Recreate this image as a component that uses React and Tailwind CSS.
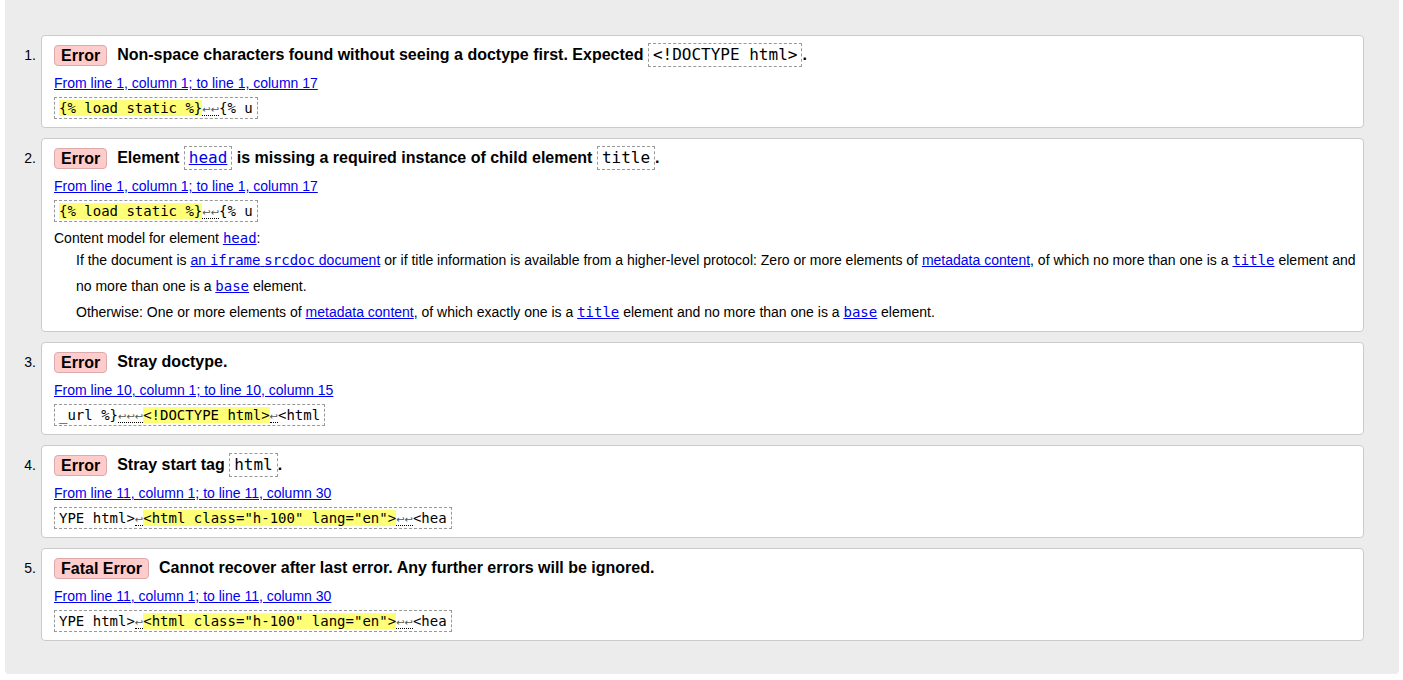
import React from 'react';

const sans = "font-['Liberation_Sans',Arial,sans-serif]";
const mono = "font-['DejaVu_Sans_Mono',monospace]";

function Badge({ children }) {
  return (
    <span className="inline-block shrink-0 rounded-[4px] border border-[#dcaaaa] bg-[#fcc] px-[6px] text-[16px] font-bold leading-[19px] text-black">
      {children}
    </span>
  );
}

function TitleCode({ children }) {
  return (
    <span className={`inline-block border border-dashed border-[#999] px-[4px] text-[16px] font-normal leading-[22px] ${mono}`}>
      {children}
    </span>
  );
}

function Ret({ n = 1 }) {
  return (
    <span className="border-b border-dotted border-black font-['DejaVu_Sans',sans-serif] text-[10px] text-[#555]">
      {'↩'.repeat(n)}
    </span>
  );
}

function Mark({ children }) {
  return <span className="bg-[#ffff77]">{children}</span>;
}

function CodeBox({ children }) {
  return (
    <div className="mt-[4px] flex">
      <span className={`block h-[22px] whitespace-pre border border-dashed border-[#999] px-[4px] text-[14px] leading-[20px] text-black ${mono}`}>
        {children}
      </span>
    </div>
  );
}

function Loc({ children }) {
  return (
    <div className="mt-[6px] h-[20px] text-[14px] leading-[20px]">
      <a href="#" className="text-[#0000ee] underline">
        {children}
      </a>
    </div>
  );
}

function Item({ n, badge, title, loc, code, children, pb = 'pb-[8px]' }) {
  return (
    <li className="flex">
      <span className="w-[36px] shrink-0 pr-[5px] pt-[8px] text-right text-[14px] leading-[24px] text-black">
        {n}.
      </span>
      <div className={`min-w-0 flex-1 rounded-[4px] border border-[#cbcbcb] bg-white px-[12px] pt-[7px] ${pb}`}>
        <div className="flex h-[24px] items-center">
          <Badge>{badge}</Badge>
          <span className="ml-[10px] flex items-center whitespace-pre text-[16px] font-bold leading-[24px] text-black">{title}</span>
        </div>
        <Loc>{loc}</Loc>
        <CodeBox>{code}</CodeBox>
        {children}
      </div>
    </li>
  );
}

const A = ({ children, m }) => (
  <a href="#" className={`text-[#0000ee] underline ${m ? mono : ''}`}>
    {children}
  </a>
);

export default function App() {
  return (
    <div className={`min-h-[680px] bg-white ${sans}`}>
      <div className="ml-[5px] mr-[4px] rounded-b-[4px] bg-[#ececec] pb-[33px] pr-[35px] pt-[35px]">
        <ol className="flex flex-col gap-[10px]">
          <Item
            n={1}
            badge="Error"
            title={
              <>
                {'Non-space characters found without seeing a doctype first. Expected '}
                <TitleCode>&lt;!DOCTYPE html&gt;</TitleCode>.
              </>
            }
            loc="From line 1, column 1; to line 1, column 17"
            code={
              <>
                <Mark>{'{% load static %}'}</Mark>
                <Ret n={2} />
                {'{% u'}
              </>
            }
          />
          <Item
            n={2}
            badge="Error"
            pb="pb-[6px]"
            title={
              <>
                {'Element '}
                <TitleCode>
                  <a href="#" className="text-[#0000ee] underline">head</a>
                </TitleCode>
                {' is missing a required instance of child element '}
                <TitleCode>title</TitleCode>.
              </>
            }
            loc="From line 1, column 1; to line 1, column 17"
            code={
              <>
                <Mark>{'{% load static %}'}</Mark>
                <Ret n={2} />
                {'{% u'}
              </>
            }
          >
            <div className="mt-[6px] text-[14px] leading-[20px] text-black">
              Content model for element <A m>head</A>:
            </div>
            <div className="-mt-[1px] pl-[22px] text-[14px] leading-[26px] text-black">
              <p className="whitespace-nowrap">
                If the document is{' '}
                <A>
                  an <span className={mono}>iframe</span> <span className={mono}>srcdoc</span> document
                </A>{' '}
                or if title information is available from a higher-level protocol: Zero or more elements of{' '}
                <A>metadata content</A>, of which no more than one is a <A m>title</A> element and
                <br />
                no more than one is a <A m>base</A> element.
              </p>
              <p>
                Otherwise: One or more elements of <A>metadata content</A>, of which exactly one is a{' '}
                <A m>title</A> element and no more than one is a <A m>base</A> element.
              </p>
            </div>
          </Item>
          <Item
            n={3}
            badge="Error"
            title="Stray doctype."
            loc="From line 10, column 1; to line 10, column 15"
            code={
              <>
                {'_url %}'}
                <Ret n={3} />
                <Mark>{'<!DOCTYPE html>'}</Mark>
                <Ret n={1} />
                {'<html'}
              </>
            }
          />
          <Item
            n={4}
            badge="Error"
            title={
              <>
                {'Stray start tag '}
                <TitleCode>html</TitleCode>.
              </>
            }
            loc="From line 11, column 1; to line 11, column 30"
            code={
              <>
                {'YPE html>'}
                <Ret n={1} />
                <Mark>{'<html class="h-100" lang="en">'}</Mark>
                <Ret n={2} />
                {'<hea'}
              </>
            }
          />
          <Item
            n={5}
            badge="Fatal Error"
            title="Cannot recover after last error. Any further errors will be ignored."
            loc="From line 11, column 1; to line 11, column 30"
            code={
              <>
                {'YPE html>'}
                <Ret n={1} />
                <Mark>{'<html class="h-100" lang="en">'}</Mark>
                <Ret n={2} />
                {'<hea'}
              </>
            }
          />
        </ol>
      </div>
    </div>
  );
}
